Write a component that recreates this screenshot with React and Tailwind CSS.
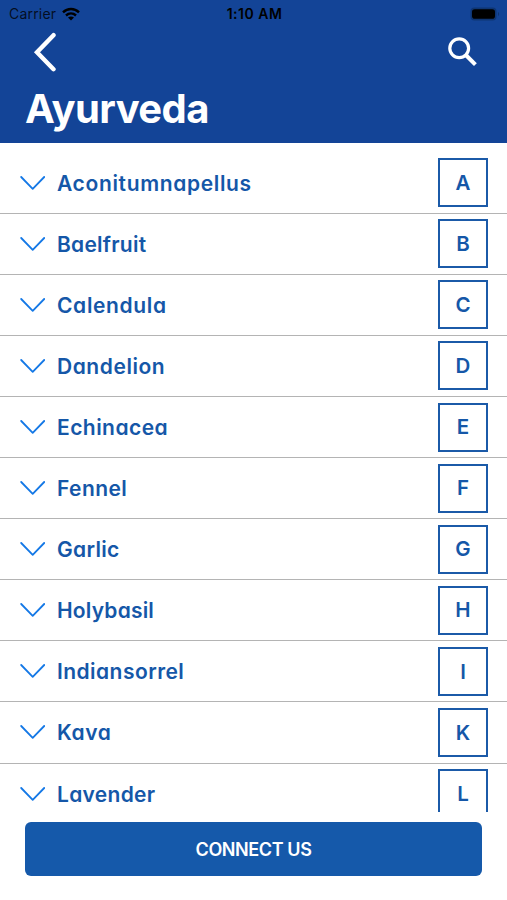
const herbs = [
  { name: 'Aconitumnapellus', letter: 'A', tracking: 'tracking-[0.65px]' },
  { name: 'Baelfruit', letter: 'B', tracking: 'tracking-[0.25px]' },
  { name: 'Calendula', letter: 'C', tracking: 'tracking-[0.65px]' },
  { name: 'Dandelion', letter: 'D', tracking: 'tracking-[0.55px]' },
  { name: 'Echinacea', letter: 'E', tracking: 'tracking-[0.45px]' },
  { name: 'Fennel', letter: 'F', tracking: 'tracking-[0.4px]' },
  { name: 'Garlic', letter: 'G', tracking: 'tracking-[0.3px]' },
  { name: 'Holybasil', letter: 'H', tracking: 'tracking-[0.2px]' },
  { name: 'Indiansorrel', letter: 'I', tracking: 'tracking-[0.45px]' },
  { name: 'Kava', letter: 'K', tracking: 'tracking-[0.6px]' },
  { name: 'Lavender', letter: 'L', tracking: 'tracking-[0.3px]' },
]

function StatusBar() {
  return (
    <div className="grid h-7 grid-cols-3 items-center pl-[9px] pr-[7px] text-black">
      <div className="flex items-center gap-[6px]">
        <span className="text-[14px] leading-7 tracking-[0.2px] text-black/80">Carrier</span>
        <svg className="h-[14px] w-[18px]" viewBox="0 0 18 14" fill="none" stroke="currentColor" strokeWidth="2.4">
          <path d="M1 5.3C5.6 .9 12.4 .9 17 5.3" />
          <path d="M4 8.5C6.9 5.8 11.1 5.8 14 8.5" />
          <path d="M9 13.5L6 10.5C7.8 9 10.2 9 12 10.5Z" fill="currentColor" stroke="none" />
        </svg>
      </div>
      <span className="text-center text-[14px] font-semibold leading-7 tracking-[0.5px]">1:10 AM</span>
      <svg className="h-[14px] w-[30px] justify-self-end" viewBox="0 0 30 14">
        <rect x=".5" y=".5" width="26" height="13" rx="4" fill="#0e3573" />
        <rect x="2" y="2.3" width="23" height="9.4" rx="2.8" fill="#000" />
        <path d="M28 5v4c1.5-.6 1.5-3.4 0-4Z" fill="#0e3573" />
      </svg>
    </div>
  )
}

function Header() {
  return (
    <header className="h-[142.5px] shrink-0 bg-[#134497]">
      <StatusBar />
      <div className="flex h-12 items-center justify-between pl-[33px] pr-[29px]">
        <svg className="h-10 w-[24px]" viewBox="0 0 24 40" fill="none" stroke="#fff" strokeWidth="4.4" strokeLinecap="round">
          <path d="M20.5 3.2L4 20.2L20.5 37.2" />
        </svg>
        <svg className="h-[30px] w-[31px]" viewBox="0 0 31 30" fill="none" stroke="#fff">
          <circle cx="12.2" cy="11.3" r="9.4" strokeWidth="3.2" />
          <path d="M18.8 18L28.4 27.6" strokeWidth="4" />
        </svg>
      </div>
      <h1 className="pl-[25px] text-[40px] font-bold leading-[66px] tracking-[-0.6px] text-white">Ayurveda</h1>
    </header>
  )
}

function HerbRow({ name, letter, tracking }) {
  return (
    <li className="flex h-[61.1px] shrink-0 items-center border-b-[1.5px] border-[#b4b4b4] pl-5 pr-[19px] text-[#1557a8]">
      <svg className="h-[14px] w-[25px]" viewBox="0 0 25 14" fill="none" stroke="#1478e6" strokeWidth="1.8" strokeLinecap="round" strokeLinejoin="round">
        <path d="M1.2 1L12.7 12.8L24.2 1" />
      </svg>
      <span className={`ml-3 flex-1 pt-[2px] text-[21px] font-semibold leading-8 [font-feature-settings:'cv11'] ${tracking}`}>{name}</span>
      <span className="flex h-[49px] w-[50px] items-center justify-center border-2 border-[#1b5aa8] pt-px text-[20.5px] font-semibold">
        {letter}
      </span>
    </li>
  )
}

export default function App() {
  return (
    <div className="flex h-screen w-full flex-col overflow-hidden bg-white font-['Inter',sans-serif]">
      <Header />
      <ul className="flex h-[669.5px] shrink-0 flex-col overflow-hidden pt-[10.1px]">
        {herbs.map(herb => (
          <HerbRow key={herb.name} {...herb} />
        ))}
      </ul>
      <div className="px-[25px] pt-[10px]">
        <button className="h-[54px] w-full rounded-[6px] bg-[#1559aa] text-[18px] font-semibold tracking-[-0.4px] text-white">
          CONNECT US
        </button>
      </div>
    </div>
  )
}
